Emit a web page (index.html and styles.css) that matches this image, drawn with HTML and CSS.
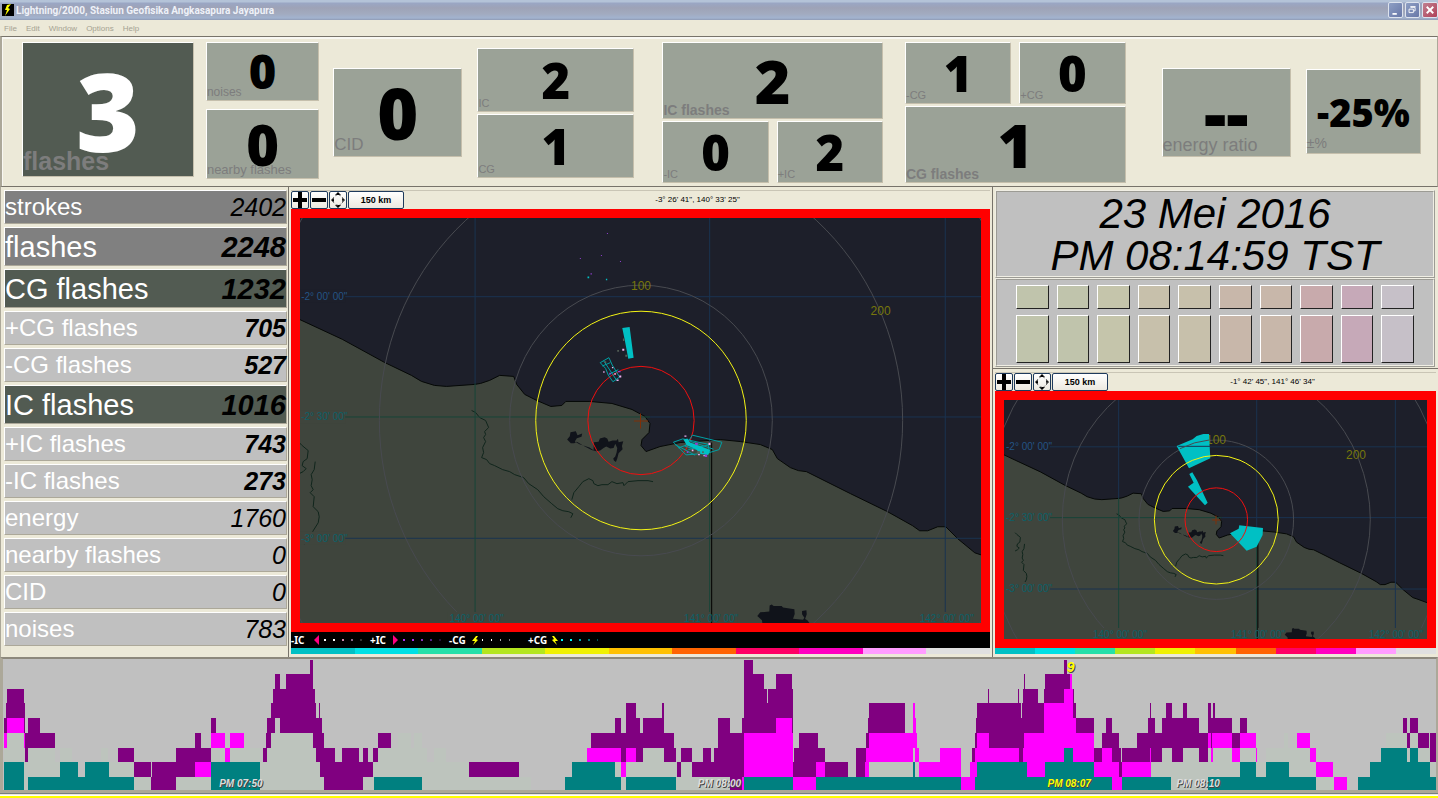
FILE: index.html
```html
<!DOCTYPE html>
<html lang="id">
<head>
<meta charset="utf-8">
<title>Lightning/2000, Stasiun Geofisika Angkasapura Jayapura</title>
<link rel="stylesheet" href="styles.css">
</head>
<body>
<svg class="defs" width="0" height="0" aria-hidden="true">
  <defs>
    <g id="base">
      <path class="land" d="M270 306L281 311 300 320 343 340 385 363 412 376 422 382 435 386 447 387 475 385 481 384 490 381 500 376 514 377 517 385 525 395 537 401 551 407 562 406 566 402 590 402 612 404 632 410 645 417 650 424 649 433 642 440 641 446 646 452 660 447 680 443 720 440 740 442 760 445 772 450 777 459 790 468 798 471 806 472 850 494 887 512 912 526 919 531 927 531 937 527 945 527 957 539 974 553 983 556 1010 566V660H270z"/>
      <path class="river" d="M472 411l4 2 4 5 6 3 3 7-4 4 1 3-2 3 2 4-3 6 1 5-2 5 5 2 3 4 5 2 8 4 7 2 5 3 9 3 5 6 9 6 6 7 8 7 6 5 5 2 6 1 4 2-2 4M572 500l2-7 5-6 4-5 6-3 4 2 1 3 4 2 4-1 6 0 4-3 5 2 6-1 1 3 4-4 10-1 10 0 5 1"/>
      <path class="river" d="M300 443l3 3 6 5-1 8-4 3-1 4 4 3-3 3-4 2M316 462l-1 8-3 5 1 5-1 6 2 4-3 3 4 4-1 10 5 5 1 5-1 6-5 8-3 6-6 8"/>
      <path class="lake" transform="translate(470 270) scale(.3333)" d="M292 510l8-10 2-12 16-3 5 12 14-5-2 10-14 4-6 10 14 8 30 10 12 8 1-24 14-1 4-10 14-4 8 4 4 10 12-4 12 0 4-5 2 10 14-3-4 14 2 10-12 12-4 16-4 10-6-4-2-6 6-6 4-12 2-14-6-12-5 12-10 2-12-6-8 4-10 8-12 2-14-4-20-10-24-14-8 4-10 0z"/>
      <path class="lake" transform="translate(700 410) scale(.3333)" d="M171 618l9-11 27-2 1-18 6-3 6 4h24l4 5 34 5 1 14-5 14 30 3 4-6-7-10 0-10 13-2 1 12-5 14 7 4 10 13H187l-2-13z"/>
      <path class="meridian-line" d="M270 297.5H1010M270 538.5H1010M475.5 200V384M709.5 200V444M944.5 200V660M650 417.5H1010"/>
      <path class="land-line" d="M270 417.5H650M475.5 384V660M709.5 444V660"/>
      <path class="border-line" d="M711.5 443V660"/>
      <g class="range"><ellipse cx="641" cy="421" rx="131" ry="135"/><ellipse cx="641" cy="421" rx="261" ry="269"/><ellipse cx="641" cy="421" rx="391" ry="402"/></g>
    </g>
    <g id="rings">
      <ellipse class="ring-yellow" cx="641" cy="421" rx="105" ry="109"/>
      <ellipse class="ring-red" cx="641" cy="421" rx="53" ry="54"/>
      <path class="station" d="M634 421.500H648M640.500 414V429"/>
    </g>
    <g id="plus"><path d="M0 6h5V0h4v6h5v4H9v6H5v-6H0z"/></g>
    <g id="pan"><path d="M4 3L7 0l3 3zM4 13l3 3 3-3zM3 5v6L0 8zM11 5v6l3-3z"/><circle cx="7" cy="8" r="5" fill="none" stroke="#888" stroke-dasharray="2 2"/></g>
    <path id="bolt" d="M4 0L6 0 4 3 6 4 1 9 3 5 0 5z"/>
  </defs>
</svg>

<header class="titlebar">
  <svg class="app-icon" viewBox="0 0 12 12"><rect width="12" height="12" fill="#000"/><path d="M5 1L9 0 6 4 8 5 3 12 5 6 3 6z" fill="#ff0"/></svg>
  <h1>Lightning/2000, Stasiun Geofisika Angkasapura Jayapura</h1>
  <div class="window-buttons">
    <button aria-label="Minimize"><svg viewBox="0 0 15 15"><path d="M4 11h5v2H4z" fill="#fff"/></svg></button>
    <button aria-label="Restore"><svg viewBox="0 0 15 15" fill="none" stroke="#fff"><path d="M3.500 6.500h5v4h-5zM5.500 5V4.500h5v4H9M5 3.500h6"/></svg></button>
    <button class="close" aria-label="Close"><svg viewBox="0 0 15 15"><path d="M4 4l7 7M11 4l-7 7" stroke="#fff" stroke-width="2"/></svg></button>
  </div>
</header>
<nav class="menu"><button>File</button><button>Edit</button><button>Window</button><button>Options</button><button>Help</button></nav>

<section class="readings">
  <div class="tile main w-main"><span class="label">flashes</span><b>3</b></div>
  <div class="group w-noise">
    <div class="tile noise"><b>0</b><span class="label">noises</span></div>
    <div class="tile nearby"><b>0</b><span class="label">nearby flashes</span></div>
  </div>
  <div class="tile cid w-cid"><b>0</b><span class="label">CID</span></div>
  <div class="group pair w-pair">
    <div class="tile small"><b>2</b><span class="label">IC</span></div>
    <div class="tile small"><b>1</b><span class="label">CG</span></div>
  </div>
  <div class="group tight w-ic">
    <div class="tile large"><b>2</b><span class="label">IC flashes</span></div>
    <div class="row"><div class="tile small"><b>0</b><span class="label">-IC</span></div><div class="tile small"><b>2</b><span class="label">+IC</span></div></div>
  </div>
  <div class="group tight w-cg">
    <div class="row"><div class="tile small"><b>1</b><span class="label">-CG</span></div><div class="tile small"><b>0</b><span class="label">+CG</span></div></div>
    <div class="tile large"><b>1</b><span class="label">CG flashes</span></div>
  </div>
  <div class="tile energy w-energy"><b>--</b><span class="label">energy ratio</span></div>
  <div class="tile percent w-percent"><b>-25%</b><span class="label">±%</span></div>
</section>

<main class="middle">
  <dl class="totals">
    <div class="gray"><dt>strokes</dt><dd>2402</dd></div>
    <div class="gray big"><dt>flashes</dt><dd>2248</dd></div>
    <div class="dark big"><dt>CG flashes</dt><dd>1232</dd></div>
    <div class="bold"><dt>+CG flashes</dt><dd>705</dd></div>
    <div class="bold"><dt>-CG flashes</dt><dd>527</dd></div>
    <div class="dark big"><dt>IC flashes</dt><dd>1016</dd></div>
    <div class="bold"><dt>+IC flashes</dt><dd>743</dd></div>
    <div class="bold"><dt>-IC flashes</dt><dd>273</dd></div>
    <div><dt>energy</dt><dd>1760</dd></div>
    <div><dt>nearby flashes</dt><dd>0</dd></div>
    <div><dt>CID</dt><dd>0</dd></div>
    <div><dt>noises</dt><dd>783</dd></div>
  </dl>

  <section class="map-panel">
    <div class="toolbar">
      <button class="tool" aria-label="Zoom in"><svg viewBox="0 0 14 16"><use href="#plus"/></svg></button>
      <button class="tool" aria-label="Zoom out"><svg viewBox="0 0 14 16"><path d="M0 6h14v4H0z"/></svg></button>
      <button class="tool" aria-label="Pan"><svg viewBox="0 0 14 16"><use href="#pan"/></svg></button>
      <button class="scale">150 km</button>
      <span class="position">-3° 26' 41", 140° 33' 25"</span>
    </div>
    <div class="map">
      <svg viewBox="300 219 681 404" preserveAspectRatio="xMidYMid slice" role="img" aria-label="Stroke map">
        <use href="#base"/>
        <g class="mask"><path class="sea" d="M300 290h46v13h-46z"/><path class="soil" d="M300 411h46v13h-46zM300 532h46v13h-46zM448 612h53v11h-53zM682 612h28v11h-28zM713 612h24v11h-24zM918 612h54v11h-54z"/></g>
        <g class="degrees"><text x="302" y="301">-2° 00' 00"</text><text class="teal" x="302" y="421">-2° 30' 00"</text><text class="teal" x="302" y="542">-3° 00' 00"</text><text class="teal" x="450" y="622">140° 00' 00"</text><text class="teal" x="684" y="622">141° 00' 00"</text><text class="teal" x="919" y="622">142° 00' 00"</text></g>
        <g class="km"><text x="641" y="291">100</text><text x="880" y="316">200</text></g>
        <use href="#rings"/>
        <g transform="translate(470 270) scale(.3333)">
          <path class="patch" d="M457 176l22-3 12 92-16 3-10-53z"/>
          <path class="outline" d="M391 280l26-15 10 22 22 36-20 14-14-20-8-20zM401 274l40 60M397 290l24-10M417 315l28-14"/>
          <path class="outline" d="M610 518l28-10 76 16 4 26-70 6zM667 497l88 21-8 22-32 10-70-20zM615 525l60 32M625 535l40-14M660 515l70 24M655 540l65-15"/>
          <path class="patch" d="M640 510l12-3 8 12 30 10 30 12-6 15-22-3-14-14-28-12z"/>
          <path class="dots-pink" d="M457 238h6v6h-6zM426 293h4v4h-4zM448 318h6v6h-6zM440 330h6v5h-6zM400 306h4v4h-4zM433 312h5v4h-5zM643 498h6v4h-6zM665 540h5v5h-5zM715 520h6v6h-6zM700 556h4v4h-4zM684 552h5v5h-5z"/>
          <path class="dots-violet" d="M362 12h4v4h-4zM444 305h8v4h-8zM675 520h8v6h-8zM704 555h7v7h-7zM418 310h5v5h-5zM650 545h5v5h-5z"/>
          <path class="dots-gray" d="M442 242h5v5h-5zM459 208h4v7h-4zM466 256h6v6h-6zM404 276h5v5h-5zM680 545h10v8h-10zM696 545h5v5h-5z"/>
          <path class="patch" d="M353 22h5v5h-5zM408 29h4v4h-4z"/>
        </g>
        <path class="dots-violet" d="M607 234h1v1h-1zM580 259h1v1h-1zM601 256h1v1h-1zM620 262h1v1h-1z"/>
      </svg>
    </div>
    <div class="legend">
      <span>-IC</span><svg viewBox="0 0 52 12"><path fill="#ff0080" d="M0 6l5-5v10z"/><path fill="#fff" d="M10 5h2v2h-2zM19 5h2v2h-2z"/><path fill="#c8a" d="M28 5h2v2h-2z"/><path fill="#868" d="M37 5h2v2h-2z"/><path fill="#333" d="M46 5h2v2h-2z"/></svg>
      <span>+IC</span><svg viewBox="0 0 52 12"><path fill="#ff0080" d="M5 6L0 1v10z"/><path fill="#a3e" d="M10 5h2v2h-2zM19 5h2v2h-2z"/><path fill="#83b" d="M28 5h2v2h-2z"/><path fill="#528" d="M37 5h2v2h-2z"/><path fill="#213" d="M46 5h2v2h-2z"/></svg>
      <span>-CG</span><svg viewBox="0 0 52 12"><use href="#bolt" y="2" fill="#ff0"/><path fill="#fff" d="M10 5h1v2h-1zM19 5h1v2h-1z"/><path fill="#aaa" d="M28 5h1v2h-1z"/><path fill="#777" d="M37 5h1v2h-1z"/></svg>
      <span>+CG</span><svg viewBox="0 0 52 12"><use href="#bolt" transform="translate(7 2) scale(-1 1)" fill="#ff0"/><path fill="#0ff" d="M10 5h2v2h-2zM19 5h2v2h-2z"/><path fill="#0aa" d="M28 5h2v2h-2z"/><path fill="#077" d="M37 5h2v2h-2z"/><path fill="#055" d="M46 5h1v2h-1z"/></svg>
    </div>
    <div class="spectrum"><i></i><i></i><i></i><i></i><i></i><i></i><i></i><i></i><i></i><i></i><i></i></div>
  </section>

  <div class="side">
    <section class="clock"><time datetime="2016-05-23T20:14:59">23 Mei 2016<br>PM 08:14:59 TST</time></section>
    <section class="swatches">
      <i></i><i></i><i></i><i></i><i></i><i></i><i></i><i></i><i></i><i></i>
      <i></i><i></i><i></i><i></i><i></i><i></i><i></i><i></i><i></i><i></i>
    </section>
    <section class="map-panel mini">
      <div class="toolbar">
        <button class="tool" aria-label="Zoom in"><svg viewBox="0 0 14 16"><use href="#plus"/></svg></button>
        <button class="tool" aria-label="Zoom out"><svg viewBox="0 0 14 16"><path d="M0 6h14v4H0z"/></svg></button>
        <button class="tool" aria-label="Pan"><svg viewBox="0 0 14 16"><use href="#pan"/></svg></button>
        <button class="scale">150 km</button>
        <span class="position">-1° 42' 45", 141° 46' 34"</span>
      </div>
      <div class="map">
        <svg viewBox="1004 400 423 239" preserveAspectRatio="xMidYMid slice" role="img" aria-label="Storm cell map">
          <g transform="translate(1216 520) scale(.59) translate(-640.5 -421.5)"><use href="#base"/></g>
          <g class="mask"><path class="sea" d="M1004 440h46v13h-46z"/><path class="soil" d="M1004 511h46v13h-46zM1004 582h46v13h-46zM1092 628h54v11h-54zM1230 628h26v11h-26zM1258 628h26v11h-26zM1368 628h54v11h-54z"/></g>
          <g class="degrees"><text x="1006" y="450">-2° 00' 00"</text><text class="teal" x="1006" y="521">-2° 30' 00"</text><text class="teal" x="1006" y="592">-3° 00' 00"</text><text class="teal" x="1093" y="638">140° 00' 00"</text><text class="teal" x="1231" y="638">141° 00' 00"</text><text class="teal" x="1369" y="638">142° 00' 00"</text></g>
          <g class="km"><text x="1216" y="444">100</text><text x="1356" y="459">200</text></g>
          <g transform="translate(990 370) scale(.3333)">
            <path class="patch" d="M560 228l48-20 12-10 20-6h17l4 73-64 30zM598 312l9-5 14 24 32 67-8 8-51-56 17-12zM720 490l26-14 2-10 71 8-1 21-18 35-30 12z"/>
            <path class="meridian-line" d="M565 229H661"/><path class="range-line" d="M570 236q44-22 88-26"/>
          </g>
          <g transform="translate(1216 520) scale(.59) translate(-640.5 -421.5)"><use href="#rings"/></g>
        </svg>
      </div>
      <div class="spectrum"><i></i><i></i><i></i><i></i><i></i><i></i><i></i><i></i><i></i><i></i><i></i></div>
    </section>
  </div>
</main>

<section class="history">
  <svg class="chart" role="img" aria-label="Flash history">
    <svg id="bars" width="100%" height="100%" viewBox="3 659 1433 131" preserveAspectRatio="none"></svg>
    <g class="ticks"><text x="16.600%" y="128">PM 07:50</text><text x="50%" y="128">PM 08:00</text><text class="now" x="74.400%" y="128">PM 08:07</text><text x="83.400%" y="128">PM 08:10</text><text class="now peak" x="74.500%" y="13">9</text></g>
  </svg>
</section>
<footer class="scrollstrip"></footer>
<script src="chart.js"></script>
</body>
</html>
```
FILE: styles.css
```css
* { box-sizing: border-box; }
html, body { margin: 0; }
body {
  min-height: 100vh;
  display: flex;
  flex-direction: column;
  background: #ece9d8;
  font-family: "Liberation Sans", Arial, sans-serif;
}
button { font-family: inherit; padding: 0; margin: 0; }
h1, dl, dd { margin: 0; }
.defs { position: absolute; }

.titlebar {
  height: 20px;
  padding: 0 0 0 2px;
  display: flex;
  align-items: center;
  gap: 2px;
  background: linear-gradient(#b4c3d8 0, #b4c3d8 2px, #9aa6c4 3px, #9ea3b7 8px, #a2abc0 14px, #a2b3cf 18px, #8f9bb5);
}
.app-icon { width: 12px; height: 12px; }
.titlebar h1 {
  font: bold 10px Roboto, sans-serif;
  color: #eef1f8;
  flex: 1;
}
.window-buttons { display: flex; gap: 2px; }
.window-buttons button {
  width: 15px;
  height: 16px;
  border: 1px solid #dde3ee;
  border-radius: 2px;
  background: linear-gradient(135deg, #8e9fc4, #6878a8);
}
.window-buttons .close { width: 16px; background: linear-gradient(135deg, #c08090, #b04058); }
.window-buttons svg { display: block; width: 100%; height: 100%; }

.menu { height: 16px; padding-left: 4px; display: flex; gap: 9px; align-items: center; }
.menu button { border: 0; background: none; font-size: 8px; color: #a5a292; }

.readings {
  height: 151px;
  padding: 5px 16px 0 20px;
  display: flex;
  align-items: flex-start;
  border: 1px solid #77736a;
  border-left: 2px solid #aca899;
  border-right-color: #aca899;
  box-shadow: inset 1px 2px #f8f7f2;
}
.tile {
  display: grid;
  background: #9ba297;
  border: 1px solid;
  border-color: #fff #c5bfac #c5bfac #fff;
}
.tile > * { grid-area: 1 / 1; }
.tile b {
  place-self: center;
  font: 800 49px/1 "Open Sans", sans-serif;
  color: #000;
}
.tile .label { align-self: end; font-size: 11px; line-height: 16px; color: #7d7d7d; white-space: nowrap; }
.group { display: flex; flex-direction: column; }
.row { display: flex; gap: 8px; }
.row .tile { flex: 1 1 0; }
.w-main { flex: 171 1 0; }
.w-noise { flex: 114 1 0; margin-left: 12px; gap: 8px; }
.w-cid { flex: 128 1 0; margin: 26px 0 0 14px; }
.w-pair { flex: 158 1 0; margin: 6px 0 0 15px; gap: 2px; }
.w-ic { flex: 222 1 0; margin-left: 28px; gap: 2px; }
.w-cg { flex: 222 1 0; margin-left: 22px; gap: 2px; }
.w-energy { flex: 128 1 0; margin: 26px 0 0 36px; }
.w-percent { flex: 114 1 0; margin: 27px 0 0 15px; }
.main { height: 135px; background: #525b52; }
.main b { font-size: 109px; color: #fff; }
.main .label { z-index: 1; font-size: 25px; line-height: 30px; font-weight: bold; }
.noise { height: 59px; }
.noise b { font-size: 47px; }
.noise .label { font-size: 12px; }
.nearby { height: 70px; }
.nearby b { font-size: 56px; }
.nearby .label { font-size: 13px; }
.cid { height: 89px; }
.cid b { font-size: 70px; }
.cid .label { font-size: 17px; line-height: 22px; }
.small { height: 62px; }
.pair .small { height: 64px; }
.large { height: 77px; }
.large b { font-size: 61px; }
.large .label { font-size: 14px; font-weight: bold; }
.energy { height: 89px; }
.energy b { font-size: 70px; }
.energy .label { font-size: 18px; line-height: 22px; }
.percent { height: 85px; }
.percent b { font-size: 38px; }
.percent .label { font-size: 14px; line-height: 20px; }

.middle { flex: 1; display: grid; grid-template-columns: 289fr 704fr 445fr; min-height: 0; }
.totals {
  padding: 3px 1px 6px 3px;
  display: flex;
  flex-direction: column;
  gap: 3px;
  border-left: 1px solid #aca899;
  border-right: 1px solid #77736a;
}
.totals div {
  height: 34px;
  display: flex;
  justify-content: space-between;
  align-items: center;
  background: #c0c0c0;
  border: 1px solid;
  border-color: #fff #aca899 #aca899 #fff;
  font-size: 24px;
  line-height: 32px;
  color: #fff;
}
.totals dd { font-style: italic; font-size: 25px; color: #000; }
.totals .gray { background: #808080; }
.totals .dark { background: #525b52; }
.totals .big { height: 39px; font-size: 29px; }
.totals .big dd { font-size: 29px; font-weight: bold; }
.totals .bold dd { font-weight: bold; }

.map-panel { display: flex; flex-direction: column; min-height: 0; min-width: 0; padding: 3px 2px 3px 2px; border-right: 1px solid #77736a; }
.toolbar { height: 19px; display: flex; gap: 1px; align-items: stretch; border-top: 1px solid #c9c5b5; }
.toolbar button { background: linear-gradient(#fff, #ece9e0); border: 1px solid #1e3a5c; border-radius: 2px; color: #000; }
.tool { width: 18px; }
.tool svg { display: block; width: 14px; height: 16px; margin: auto; }
.scale { width: 56px; font-size: 9px; font-weight: bold; }
.position { flex: 1; font-size: 8px; line-height: 18px; text-align: center; }
.map { flex: 1; min-height: 0; position: relative; border: 9px solid #f00; overflow: hidden; }
.map > svg { position: absolute; inset: 0; width: 100%; height: 100%; background: #1d1f2a; }
.land { fill: #3f453d; stroke: #050806; }
.river { fill: none; stroke: #10251c; }
.lake { fill: #10131a; }
.meridian-line, .land-line, .border-line, .range ellipse, .ring-yellow, .ring-red, .station, .outline, .range-line, .land, .river { vector-effect: non-scaling-stroke; }
.meridian-line { fill: none; stroke: #1a3350; }
.land-line { fill: none; stroke: #174438; }
.border-line { stroke: #000; }
.range ellipse, .range-line { fill: none; stroke: #484a50; }
.ring-yellow { fill: none; stroke: #f4f414; }
.ring-red { fill: none; stroke: #f01010; }
.station { stroke: #803008; }
.sea { fill: #1d1f2a; }
.soil { fill: #3f453d; }
.degrees { font-size: 10px; fill: #245484; }
.degrees .teal { fill: #0c6068; }
.km { font-size: 12px; fill: #77770c; text-anchor: middle; }
.patch { fill: #00c0c4; }
.outline { fill: none; stroke: #00a0a4; }
.dots-pink { fill: #f0b0f0; }
.dots-violet { fill: #9040d0; }
.dots-gray { fill: #556058; }
.legend {
  height: 16px;
  display: flex;
  align-items: center;
  background: #000;
  color: #fff;
  font: bold 10px "Noto Sans", sans-serif;
}
.legend span { width: 23px; white-space: nowrap; }
.legend svg { width: 52px; height: 12px; margin-right: 4px; }
.spectrum { height: 6px; display: flex; }
.spectrum i { flex: 1; background: #00c0c4; }
.spectrum i:nth-child(2) { background: #00e0e4; }
.spectrum i:nth-child(3) { background: #26e0a8; }
.spectrum i:nth-child(4) { background: #b4e61e; }
.spectrum i:nth-child(5) { background: #f0f000; }
.spectrum i:nth-child(6) { background: #ffc000; }
.spectrum i:nth-child(7) { background: #ff6400; }
.spectrum i:nth-child(8) { background: #ff0064; }
.spectrum i:nth-child(9) { background: #ff00c0; }
.spectrum i:nth-child(10) { background: #ff9cff; }
.spectrum i:nth-child(11) { background: #e0e0e0; }

.side { display: flex; flex-direction: column; min-height: 0; min-width: 0; padding-top: 3px; }
.clock, .swatches { margin: 0 3px 0 2px; background: #c0c0c0; border: 2px ridge #f0eee4; }
.clock { height: 88px; padding-top: 1px; text-align: center; font-size: 42px; line-height: 42px; font-style: italic; }
.swatches { height: 89px; padding: 5px 19px 0; display: grid; grid-template-columns: repeat(10, 1fr); grid-template-rows: 24px 48px; gap: 6px 8px; }
.swatches i { border: 1px solid; border-color: #fff #222 #222 #fff; background: #c0c4ac; }
.swatches i:nth-child(10n+3) { background: #c5c5ab; }
.swatches i:nth-child(10n+4), .swatches i:nth-child(10n+5) { background: #c7c0ab; }
.swatches i:nth-child(10n+6), .swatches i:nth-child(10n+7) { background: #c8b7aa; }
.swatches i:nth-child(10n+8) { background: #c8aaac; }
.swatches i:nth-child(10n+9) { background: #c6a9b8; }
.swatches i:nth-child(10n) { background: #c6c0c8; }
.mini { flex: 1; margin-top: 1px; border-top: 1px solid #77736a; border-right: 0; }

.history {
  height: 136px;
  border: 2px solid;
  border-width: 2px 2px 3px 3px;
  border-color: #8c887c #aca899 #aca899 #aca899;
  background: #c0c0c0;
}
.chart { display: block; width: 100%; height: 131px; overflow: hidden; }
#bars { shape-rendering: crispEdges; }
.ticks { font-size: 10px; font-weight: bold; font-style: italic; fill: #ddd; text-anchor: middle; }
.ticks text { text-shadow: 1px 1px #444; }
.ticks .now { fill: #ff0; }
.ticks .peak { font-size: 14px; }
.scrollstrip { height: 5px; background: linear-gradient(#77807f 0 1px, #ece9d8 1px 2px, #fff 2px 3px, #ff0 3px); }
```
FILE: chart.js
```js
// Each row lists "colour from to" runs along the time axis, lowest row first.
const fills = { P: '#800080', M: '#ff00ff', G: '#bdc4bd', T: '#008080' };
const edges = [790, 777, 762, 748, 733, 718, 703, 689, 674, 660];
const rows = [
  'T 4 24,G 24 28,T 28 134,G 134 151,P 151 176,G 176 211,T 211 260,G 260 324,P 324 363,G 363 374,T 374 422,G 422 531,T 565 621,G 621 626,T 626 676,G 676 730,P 730 742,M 742 744,T 744 793,M 793 816,T 816 961,M 961 975,T 975 1112,M 1112 1122,T 1122 1171,G 1171 1208,T 1208 1316,G 1316 1334,M 1334 1347,T 1358 1436',
  'T 4 24,G 24 60,T 60 78,T 85 109,G 109 134,P 134 151,P 152 195,M 195 211,T 211 260,G 260 320,P 320 373,G 373 469,P 469 519,T 572 615,G 615 621,M 621 626,G 626 676,P 677 681,G 681 692,P 692 744,M 744 793,P 793 816,M 816 825,P 825 848,P 856 865,M 865 869,G 869 913,T 913 915,G 915 919,M 919 961,M 970 977,T 977 1027,M 1027 1045,T 1045 1094,M 1094 1119,P 1119 1122,M 1122 1151,G 1151 1240,T 1240 1256,G 1256 1266,T 1266 1289,G 1289 1316,M 1316 1333,T 1370 1430,G 1430 1436',
  'G 4 24,P 25 28,G 28 55,G 60 72,G 101 108,P 118 134,P 176 211,G 211 225,M 225 230,G 230 260,P 263 267,G 267 316,P 316 335,P 342 359,P 363 368,P 373 378,G 378 427,G 434 446,M 587 621,P 621 626,M 626 636,P 636 643,G 643 664,P 664 676,P 681 692,P 703 711,P 714 744,M 744 793,P 794 825,P 856 866,M 866 913,G 913 915,M 915 919,M 940 961,P 972 975,M 975 1019,P 1019 1023,M 1023 1064,T 1064 1073,M 1073 1094,P 1094 1102,M 1102 1112,P 1112 1121,P 1122 1150,M 1150 1151,P 1151 1162,G 1162 1172,P 1172 1183,G 1183 1199,P 1199 1208,G 1208 1211,M 1211 1213,G 1213 1232,M 1232 1240,G 1240 1256,M 1256 1257,G 1266 1310,M 1310 1316,T 1381 1407,G 1407 1410,T 1410 1418,G 1418 1430,P 1430 1436',
  'M 4 7,G 7 24,M 24 25,P 25 55,P 195 201,M 211 225,M 230 244,P 266 271,G 271 313,P 313 324,P 378 391,G 398 411,G 414 422,P 591 674,P 718 744,M 744 793,P 799 818,P 866 869,M 869 917,P 975 977,M 977 989,P 989 1024,M 1024 1094,P 1102 1119,P 1137 1208,M 1208 1211,P 1211 1212,M 1212 1232,P 1232 1240,M 1240 1256,G 1284 1288,M 1297 1310,G 1386 1407,P 1407 1410,G 1410 1418,P 1418 1429,P 1430 1436',
  'P 4 7,M 7 24,P 24 25,P 28 40,P 211 216,P 267 275,P 280 322,P 615 621,P 626 640,P 643 664,P 718 730,P 742 776,M 776 792,P 792 793,P 868 905,M 913 916,P 976 1044,M 1044 1076,P 1076 1094,P 1106 1112,P 1148 1155,P 1162 1199,P 1208 1232,P 1240 1247,P 1403 1407,P 1410 1418',
  'P 6 25,P 271 316,P 319 320,P 626 636,P 662 664,P 744 793,P 869 905,M 913 915,P 977 1021,P 1022 1044,M 1044 1073,P 1073 1076,P 1150 1151,P 1166 1172,P 1183 1187,P 1208 1211,P 1213 1215',
  'P 7 24,P 273 315,P 744 767,P 768 793,P 988 989,P 1018 1019,P 1023 1038,P 1044 1064,M 1064 1073,P 1073 1074',
  'P 275 280,P 286 313,P 744 764,P 776 792,P 1024 1025,P 1045 1070,M 1070 1072',
  'P 310 313,P 744 753,P 1064 1067'
];
const paths = { P: '', M: '', G: '', T: '' };
rows.forEach((row, level) => {
  row.split(',').forEach((run) => {
    const [key, from, to] = run.split(' ');
    paths[key] += `M${from} ${edges[level]}H${to}V${edges[level + 1]}H${from}z`;
  });
});
const bars = document.getElementById('bars');
Object.keys(paths).forEach((key) => {
  const path = document.createElementNS('http://www.w3.org/2000/svg', 'path');
  path.setAttribute('d', paths[key]);
  path.setAttribute('fill', fills[key]);
  bars.appendChild(path);
});
```
